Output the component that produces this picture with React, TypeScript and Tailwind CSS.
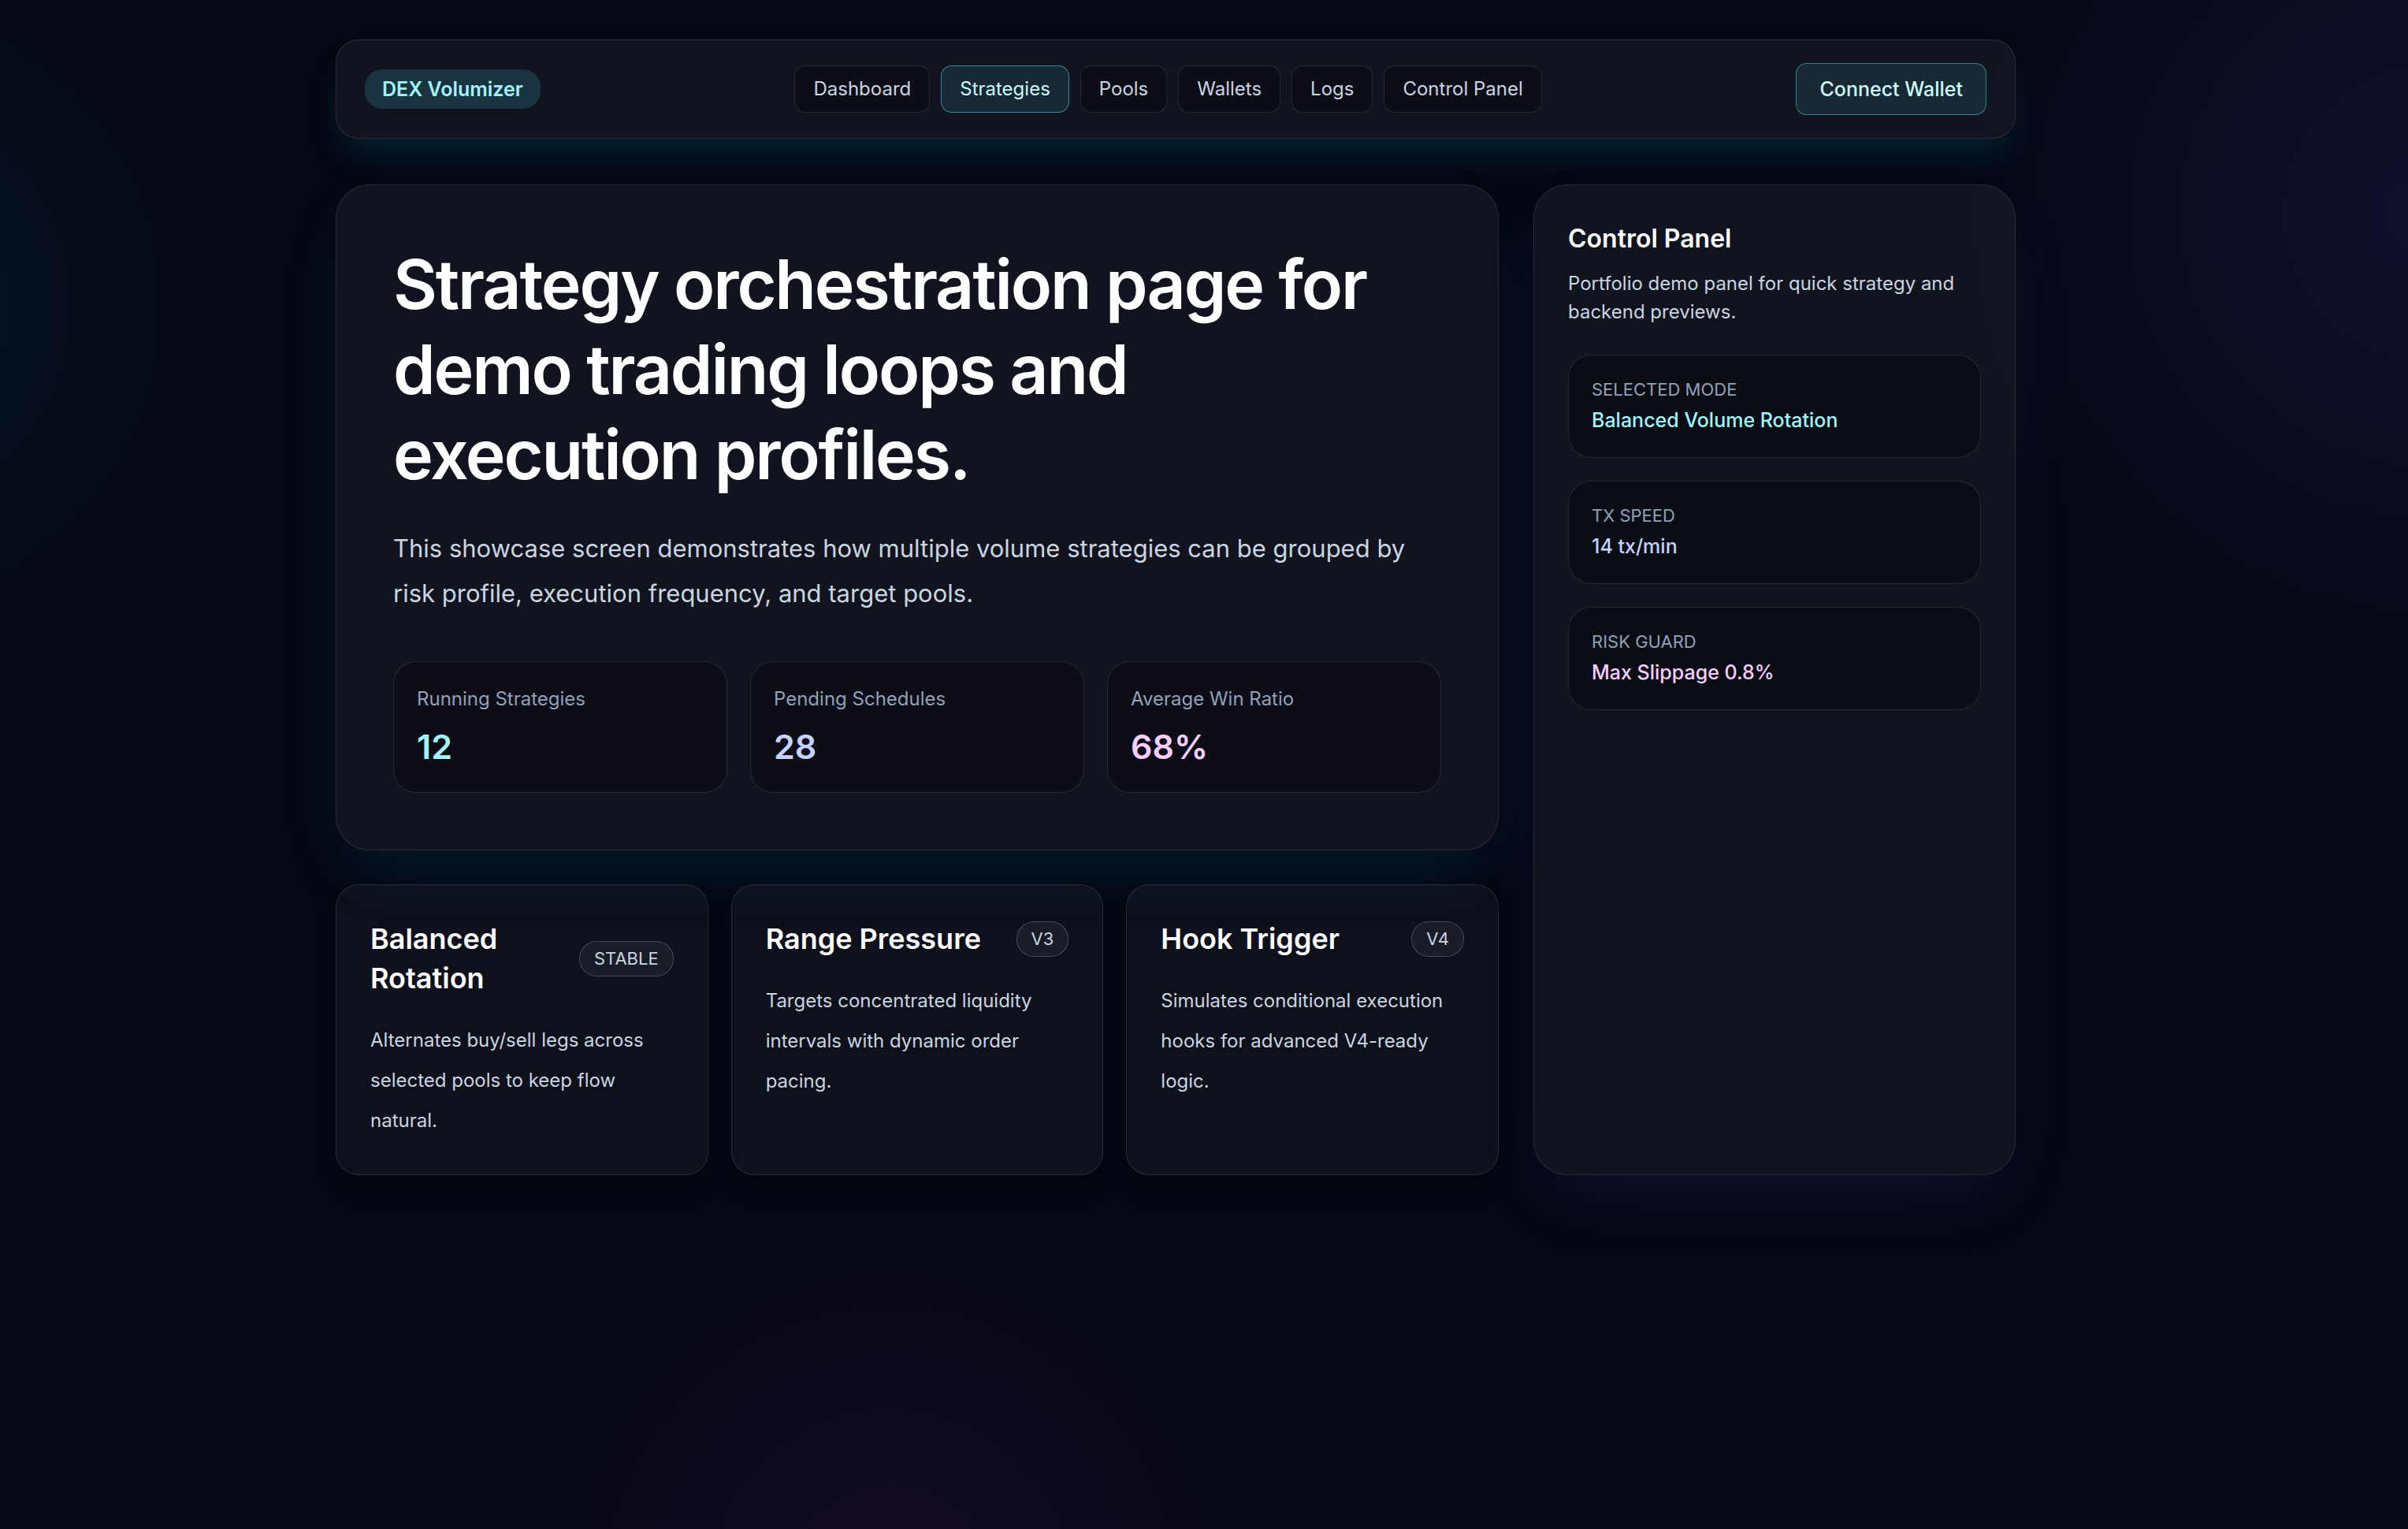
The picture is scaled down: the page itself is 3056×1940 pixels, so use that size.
import type { ReactNode } from "react";

const navItems = ["Dashboard", "Strategies", "Pools", "Wallets", "Logs", "Control Panel"];

const stats = [
  { label: "Running Strategies", value: "12", color: "text-cyan-200" },
  { label: "Pending Schedules", value: "28", color: "text-indigo-200" },
  { label: "Average Win Ratio", value: "68%", color: "text-fuchsia-200" },
];

const strategies = [
  {
    title: "Balanced Rotation",
    tag: "STABLE",
    text: "Alternates buy/sell legs across selected pools to keep flow natural.",
  },
  {
    title: "Range Pressure",
    tag: "V3",
    text: "Targets concentrated liquidity intervals with dynamic order pacing.",
  },
  {
    title: "Hook Trigger",
    tag: "V4",
    text: "Simulates conditional execution hooks for advanced V4-ready logic.",
  },
];

const panelItems = [
  { label: "SELECTED MODE", value: "Balanced Volume Rotation", color: "text-cyan-200" },
  { label: "TX SPEED", value: "14 tx/min", color: "text-indigo-200" },
  { label: "RISK GUARD", value: "Max Slippage 0.8%", color: "text-fuchsia-200" },
];

function Navbar() {
  return (
    <header className="flex items-center justify-between rounded-[29px] border border-white/10 bg-white/5 px-9 py-[29px] shadow-[0_27px_45px_-12px_rgba(6,182,212,0.17)]">
      <a
        href="#"
        className="rounded-[22px] bg-cyan-300/15 px-[22px] py-[7px] text-[25px] font-semibold text-cyan-200"
      >
        DEX Volumizer
      </a>
      <nav className="flex gap-[14px]">
        {navItems.map((item) => (
          <a
            key={item}
            href="#"
            className={
              item === "Strategies"
                ? "rounded-[14px] border border-cyan-300/50 bg-cyan-300/10 px-[23px] py-[11px] text-cyan-100"
                : "rounded-[14px] border border-white/10 bg-[#0d0c16]/80 px-[23px] py-[11px] text-slate-300"
            }
          >
            {item}
          </a>
        ))}
      </nav>
      <button
        type="button"
        className="rounded-[14px] border border-cyan-300/45 bg-cyan-300/10 px-[29px] py-[14px] text-[25px] font-medium text-cyan-100"
      >
        Connect Wallet
      </button>
    </header>
  );
}

function Hero() {
  return (
    <section className="rounded-[43px] border border-white/10 bg-white/5 p-[72px] shadow-[0_36px_90px_-18px_rgba(6,182,212,0.12)]">
      <h1 className="text-[86px] leading-[108px] font-semibold tracking-tight text-white">
        Strategy orchestration page for demo trading loops and execution profiles.
      </h1>
      <p className="mt-9 text-[31px] leading-[57px] text-slate-300">
        This showcase screen demonstrates how multiple volume strategies can be grouped by risk profile, execution
        frequency, and target pools.
      </p>
      <div className="mt-[58px] grid grid-cols-3 gap-[29px]">
        {stats.map((stat) => (
          <div key={stat.label} className="rounded-[29px] border border-white/10 bg-[#0d0c16]/80 p-[29px]">
            <p className="text-slate-400">{stat.label}</p>
            <p className={`mt-[14px] text-[43px] leading-[57px] font-semibold ${stat.color}`}>{stat.value}</p>
          </div>
        ))}
      </div>
    </section>
  );
}

function StrategyCard({ title, tag, children }: { title: string; tag: string; children: ReactNode }) {
  return (
    <article className="rounded-[29px] border border-white/10 bg-white/[0.04] p-[43px] shadow-[0_18px_27px_-5px_rgba(0,0,0,0.3)]">
      <div className="flex items-center justify-between">
        <h2 className="text-[36px] leading-[50px] font-semibold text-white">{title}</h2>
        <span className="rounded-[22px] border border-white/20 bg-white/5 px-[18px] py-[7px] text-[22px] leading-[29px] text-slate-300">
          {tag}
        </span>
      </div>
      <p className="mt-7 leading-[51px] text-slate-300">{children}</p>
    </article>
  );
}

function ControlPanel() {
  return (
    <aside className="rounded-[43px] border border-white/10 bg-white/5 p-[43px] shadow-[0_36px_90px_-18px_rgba(99,102,241,0.12)]">
      <h2 className="text-[32px] leading-[50px] font-semibold text-white">Control Panel</h2>
      <p className="mt-[14px] text-slate-300">Portfolio demo panel for quick strategy and backend previews.</p>
      <div className="mt-9 space-y-[29px]">
        {panelItems.map((item) => (
          <div key={item.label} className="rounded-[29px] border border-white/10 bg-black/30 p-[29px]">
            <p className="text-[22px] leading-[28px] text-slate-400">{item.label}</p>
            <p className={`mt-[7px] text-[25px] font-medium ${item.color}`}>{item.value}</p>
          </div>
        ))}
      </div>
    </aside>
  );
}

export default function App() {
  return (
    <div className="min-h-screen bg-[#050713] bg-[radial-gradient(circle_500px_at_-6%_20%,rgba(6,182,212,0.1),rgba(6,182,212,0.04)_50%,rgba(6,182,212,0)),radial-gradient(circle_620px_at_101%_14%,rgba(99,102,241,0.11),rgba(99,102,241,0.06)_50%,rgba(99,102,241,0)),radial-gradient(circle_500px_at_37%_104%,rgba(217,70,239,0.08),rgba(217,70,239,0.03)_50%,rgba(217,70,239,0))] py-[50px] pr-[72px] font-[Inter,sans-serif] text-[24px] leading-9">
      <div className="mx-auto max-w-[2132px]">
        <Navbar />
        <main className="mt-[58px] grid grid-cols-[minmax(0,1fr)_612px] gap-11">
          <div className="flex flex-col gap-[43px]">
            <Hero />
            <section className="grid grid-cols-3 gap-[29px]">
              {strategies.map((item) => (
                <StrategyCard key={item.title} title={item.title} tag={item.tag}>
                  {item.text}
                </StrategyCard>
              ))}
            </section>
          </div>
          <ControlPanel />
        </main>
      </div>
    </div>
  );
}
